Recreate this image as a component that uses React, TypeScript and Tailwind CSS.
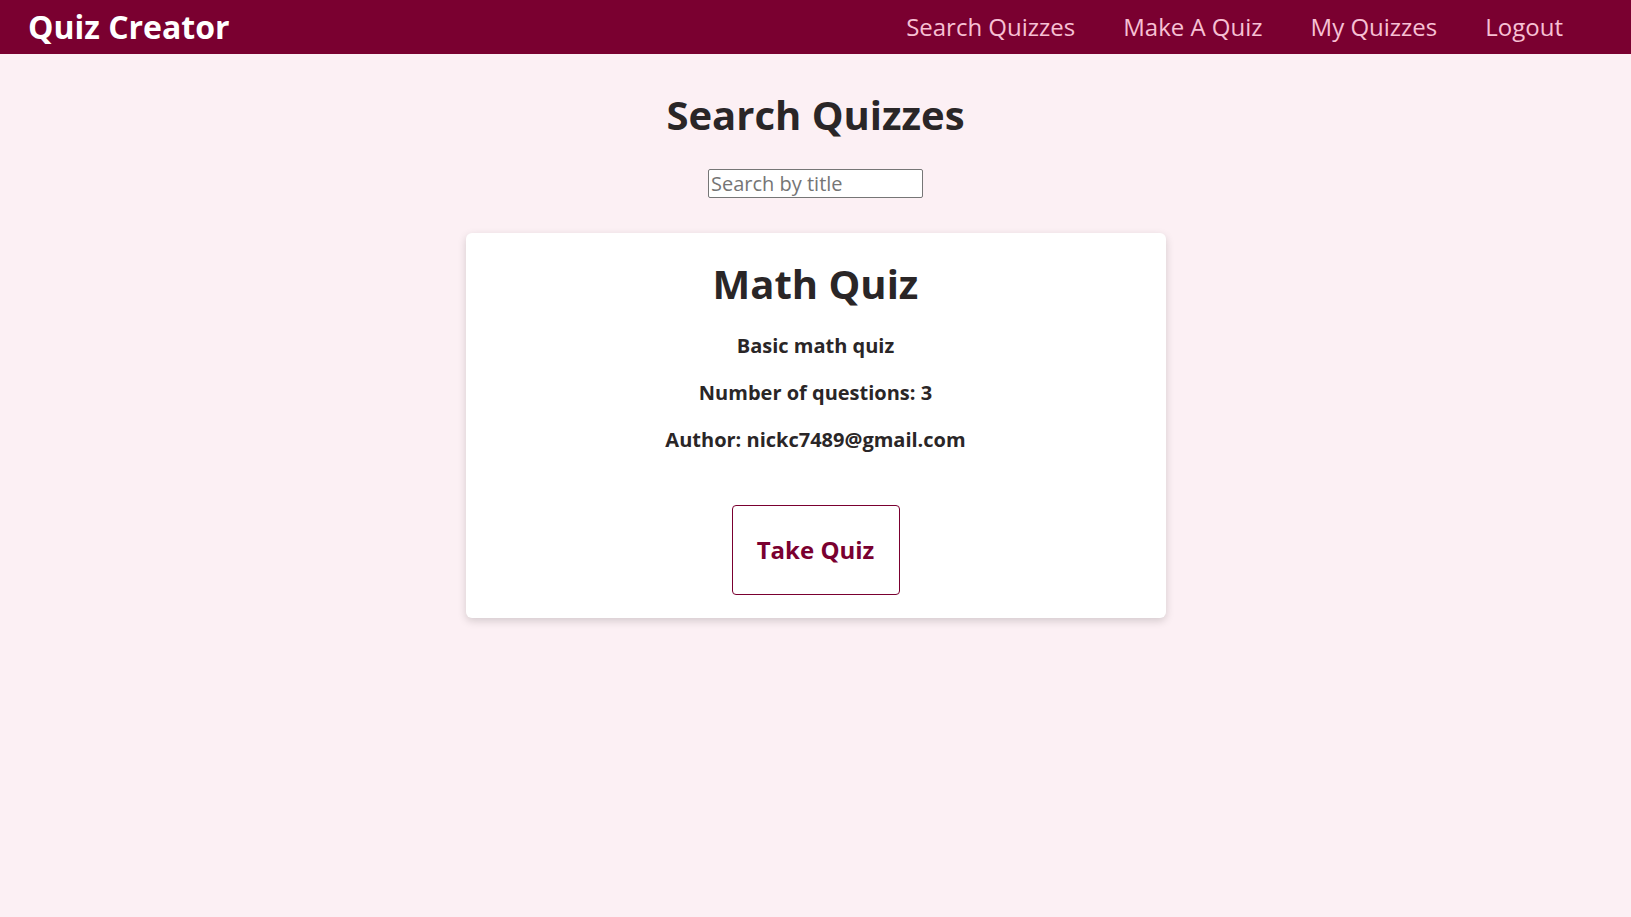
import React from "react";

export default function App() {
  return (
    <div className="min-h-[917px] w-full bg-[#fcf0f4] font-['Open_Sans',sans-serif] text-[#2a2627]">
      <header className="flex h-[54px] items-center justify-between bg-[#7a0030] pl-[28px] pr-[68px]">
        <div className="text-[32px] font-bold leading-none text-white">Quiz Creator</div>
        <nav className="flex gap-[48px] text-[24px] leading-none text-[#f7c0d4]">
          <a href="#">Search Quizzes</a>
          <a href="#">Make A Quiz</a>
          <a href="#">My Quizzes</a>
          <a href="#">Logout</a>
        </nav>
      </header>
      <main className="flex flex-col items-center">
        <h1 className="mt-[34px] text-[40px] font-bold leading-[54px]">Search Quizzes</h1>
        <input
          type="text"
          placeholder="Search by title"
          className="mt-[27px] h-[29px] w-[215px] rounded-[2px] border border-[#767676] bg-white px-[2px] text-[20px] leading-[27px] text-[#2a2627] placeholder:text-[#757575] outline-none"
        />
        <div className="mt-[35px] flex w-[700px] flex-col items-center rounded-[6px] bg-white pb-[23px] pt-[22px] shadow-[0_3px_8px_rgba(0,0,0,0.16)]">
          <h2 className="text-[40px] font-bold leading-[57px]">Math Quiz</h2>
          <p className="mt-[20px] text-[20px] font-bold leading-[27px]">Basic math quiz</p>
          <p className="mt-[20px] text-[20px] font-bold leading-[27px]">Number of questions: 3</p>
          <p className="mt-[20px] text-[20px] font-bold leading-[27px]">Author: nickc7489@gmail.com</p>
          <button className="mt-[52px] flex h-[90px] w-[168px] items-center justify-center rounded-[4px] border border-[#7a0030] bg-white text-[24px] font-bold text-[#7a0030]">
            Take Quiz
          </button>
        </div>
      </main>
    </div>
  );
}
